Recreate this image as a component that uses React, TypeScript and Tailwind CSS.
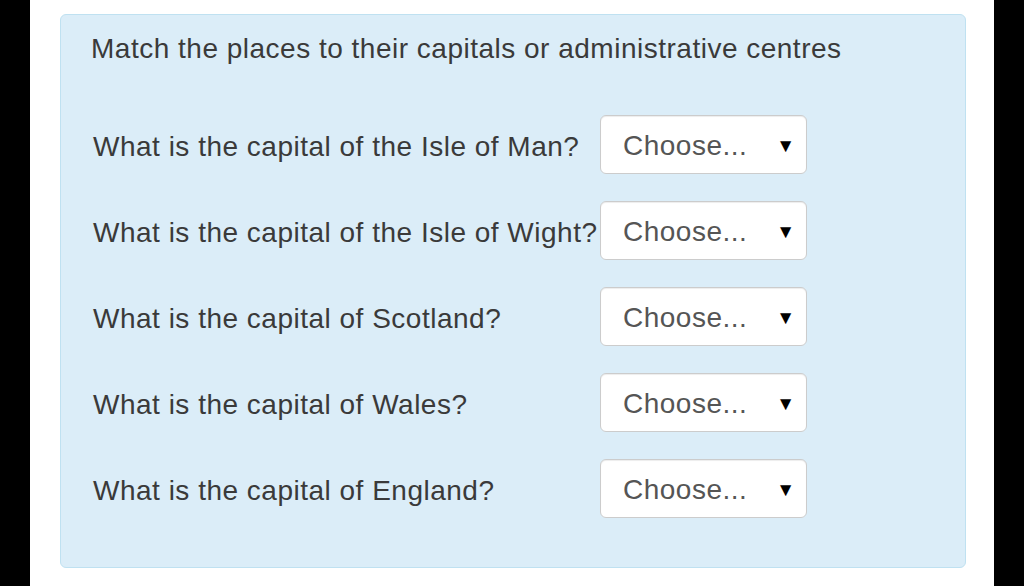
const QUESTIONS = [
  'What is the capital of the Isle of Man?',
  'What is the capital of the Isle of Wight?',
  'What is the capital of Scotland?',
  'What is the capital of Wales?',
  'What is the capital of England?',
];

function ChooseBox() {
  return (
    <div className="flex h-[59px] w-[207px] items-center justify-between rounded-[6px] border border-[#cccccc] bg-white pl-[22px] pr-[11px] pt-[3px] shadow-[inset_0_1px_1px_rgba(0,0,0,0.075)]">
      <span className="text-[28px] tracking-[0.5px] text-[#555555]">Choose...</span>
      <span className="text-[19px] text-black">▼</span>
    </div>
  );
}

export default function App() {
  return (
    <div
      className="flex h-[586px] w-[1024px] overflow-hidden bg-black"
      style={{ fontFamily: '"Liberation Sans", Arial, sans-serif' }}
    >
      <div className="w-[30px] shrink-0 bg-black" />
      <div className="flex w-[964px] shrink-0 flex-col bg-white pl-[30px] pr-[28px] pt-[14px]">
        {/* question panel */}
        <div className="flex h-[554px] flex-col rounded-[6px] border border-[#bfe1f1] bg-[#dbedf8] pl-[30px] pt-[16px]">
          <h2 className="text-[28px] leading-[36px] tracking-[0.5px] text-[#3a3a3a]">
            Match the places to their capitals or administrative centres
          </h2>
          <div className="mt-[48px] flex flex-col gap-[27px]">
            {QUESTIONS.map((q) => (
              <div key={q} className="flex items-center">
                <label className="w-[509px] shrink-0 pl-[2px] pt-[5px] text-[28px] tracking-[0.5px] text-[#3a3a3a]">
                  {q}
                </label>
                <ChooseBox />
              </div>
            ))}
          </div>
        </div>
      </div>
      <div className="w-[30px] shrink-0 bg-black" />
    </div>
  );
}
